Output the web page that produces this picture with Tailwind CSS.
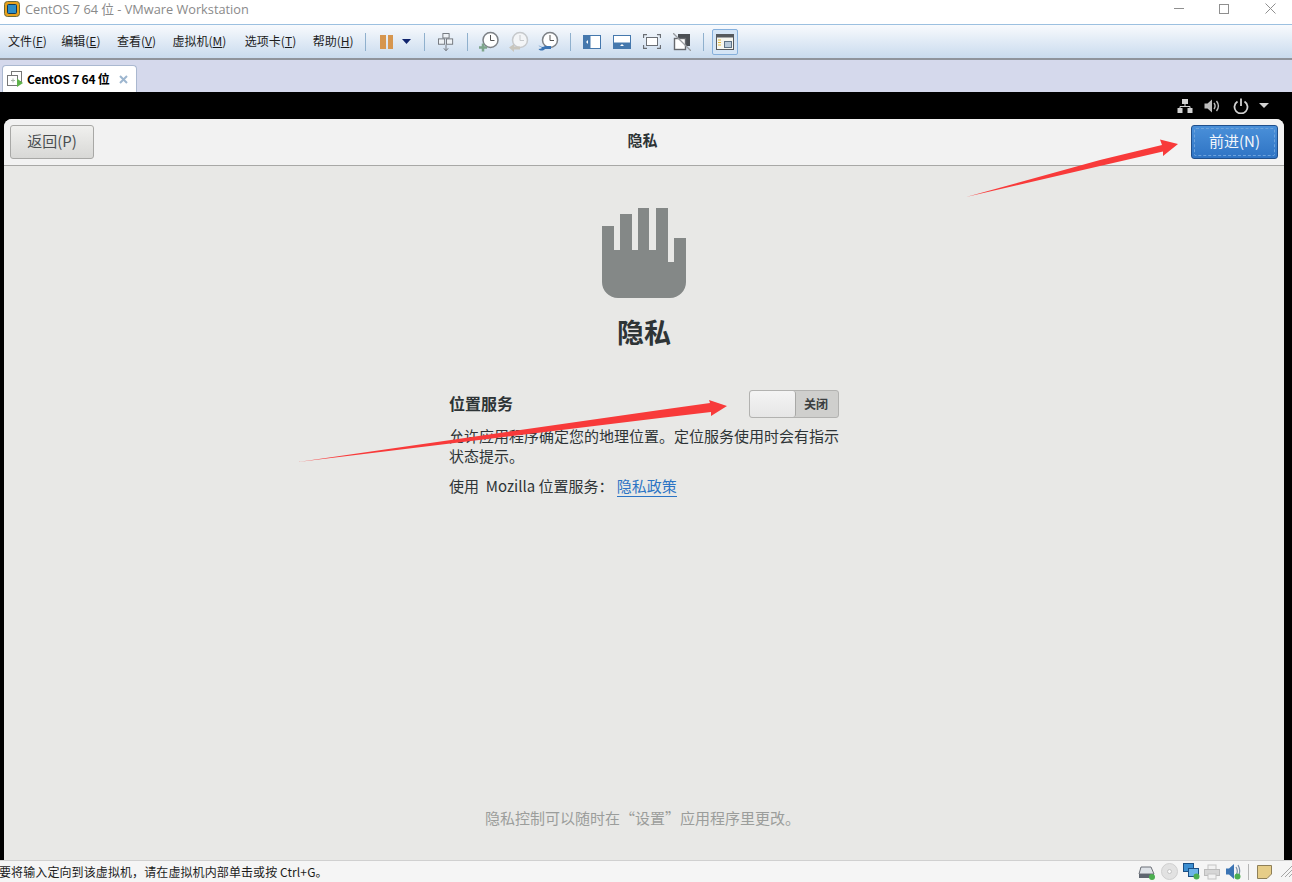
<!DOCTYPE html>
<html lang="zh-CN">
<head>
<meta charset="utf-8">
<title>CentOS 7 64 位 - VMware Workstation</title>
<script src="https://cdn.jsdelivr.net/npm/@tailwindcss/browser@4"></script>
</head>
<body class="m-0 overflow-hidden bg-white">
<div class="relative flex h-[882px] w-[1292px] flex-col overflow-hidden font-['Open_Sans','Noto_Sans_CJK_SC',sans-serif]">

  <!-- title bar -->
  <div class="flex h-[25px] shrink-0 items-center border-b border-[#9cc0e0] bg-white pb-[7px]">
    <svg class="ml-[4px] h-[16px] w-[16px]" viewBox="0 0 16 16"><rect x="0.5" y="0.5" width="15" height="15" rx="3" fill="#e9a21c" stroke="#6d6a3a"/><rect x="3.5" y="3.5" width="9" height="9" rx="1" fill="#2f8fc6" stroke="#123b57"/></svg>
    <span class="ml-[5px] text-[12.75px] leading-[16px] text-[#8a8a8a]">CentOS 7 64 位 - VMware Workstation</span>
    <div class="ml-auto flex items-center">
      <div class="mr-[35px] h-px w-[10px] bg-[#8f8f8f]"></div>
      <div class="mr-[36px] h-[10px] w-[10px] border border-[#8f8f8f]"></div>
      <svg class="mr-[16px] h-[11px] w-[11px]" viewBox="0 0 11 11"><path d="M0.5 0.5 10.5 10.5M10.5 0.5 0.5 10.5" stroke="#8f8f8f" fill="none"/></svg>
    </div>
  </div>

  <!-- toolbar -->
  <div class="flex h-[35px] shrink-0 items-center border-b-2 border-[#8f949c] bg-linear-to-b from-[#f8fafd] to-[#c9dbee] pl-[8px] font-['Noto_Sans_CJK_SC',sans-serif] text-[12px] text-[#1c1c1c]">
    <div class="flex w-[357px] gap-[16.5px] pb-[2px]">
      <span class="mr-[-2px]">文件(<u>F</u>)</span><span>编辑(<u>E</u>)</span><span>查看(<u>V</u>)</span><span>虚拟机(<u>M</u>)</span><span class="ml-[2px]">选项卡(<u>T</u>)</span><span>帮助(<u>H</u>)</span>
    </div>
    <div class="h-[18px] w-px bg-[#8fb0cd]"></div>
    <div class="ml-[14px] flex gap-[2px]"><div class="h-[14px] w-[6px] bg-[#d6964f]"></div><div class="h-[14px] w-[5px] bg-[#d6964f]"></div></div>
    <svg class="ml-[9px] h-[5px] w-[9px]" viewBox="0 0 9 5"><path d="M0 0H9L4.500 5Z" fill="#10246e"/></svg>
    <div class="ml-[13px] h-[18px] w-px bg-[#8fb0cd]"></div>
    <svg class="ml-[13px] h-[24px] w-[16px]" viewBox="0 0 18 24"><g fill="#eef2f6" stroke="#6b6f75"><rect x="5.500" y="2.500" width="7" height="5"/><rect x="0.500" y="8.500" width="7" height="6"/><rect x="9.500" y="8.500" width="7" height="6"/></g><path d="M9 15v6M6.500 19 9 22l2.500-3" stroke="#6b6f75" fill="none"/></svg>
    <div class="ml-[13px] h-[18px] w-px bg-[#8fb0cd]"></div>
    <svg class="ml-[10px] h-[24px] w-[21px]" viewBox="0 0 21 24"><circle cx="12.500" cy="10" r="7.500" fill="#fff" stroke="#7d8186" stroke-width="1.500"/><path d="M12.500 5v5.500h4" stroke="#555" fill="none"/><path d="M1 17.500h8M5 13.500v8" stroke="#7ea58c" stroke-width="2.500"/></svg>
    <svg class="ml-[9px] h-[24px] w-[21px]" viewBox="0 0 21 24"><circle cx="12" cy="10" r="7.500" fill="#f3f5f7" stroke="#c6c9cc" stroke-width="1.500"/><path d="M12 5v5.500h4" stroke="#c6c9cc" fill="none"/><path d="M1 17.500 6 14v2.500h6v3H6V22Z" fill="#c9c6bd"/></svg>
    <svg class="ml-[9px] h-[24px] w-[21px]" viewBox="0 0 21 24"><circle cx="12" cy="10" r="7.500" fill="#fff" stroke="#7d8186" stroke-width="1.500"/><path d="M12 5v5.500h4" stroke="#555" fill="none"/><path d="M0.500 15.500c2 2 5 1.500 6.500.5h6v3H7c-2 2-5 2-6.500 0l3-.5v-2Z" fill="#3b74b4"/></svg>
    <div class="ml-[11px] h-[18px] w-px bg-[#8fb0cd]"></div>
    <svg class="ml-[12px] h-[14px] w-[18px]" viewBox="0 0 18 14"><rect width="18" height="14" fill="#4578ad"/><rect x="7.500" y="1" width="9.500" height="12" fill="#fff"/><path d="M3 7 5 5v4Z" fill="#fff"/></svg>
    <svg class="ml-[12px] h-[14px] w-[18px]" viewBox="0 0 18 14"><rect width="18" height="14" fill="#4578ad"/><rect x="1" y="1" width="16" height="6.500" fill="#fff"/><path d="M7 11l2-2 2 2Z" fill="#fff"/></svg>
    <svg class="ml-[12px] h-[15px] w-[18px]" viewBox="0 0 18 15"><rect x="3.500" y="3.500" width="11" height="8" fill="#fff" stroke="#6b6f75"/><path d="M0.500 4V.5H4M14 .5h3.500V4M17.500 11v3.500H14M4 14.500H.5V11" stroke="#6b6f75" stroke-width="1.300" fill="none"/></svg>
    <svg class="ml-[12px] h-[18px] w-[18px]" viewBox="0 0 18 18"><rect x="5.500" y="1.500" width="11" height="11" fill="#4a4e53" stroke="#4a4e53"/><rect x="1.500" y="5.500" width="11" height="11" fill="#fff" stroke="#66696e" stroke-width="1.400"/><path d="M0 0 18 18" stroke="#9a9da1" stroke-width="1.300"/></svg>
    <div class="ml-[12px] h-[18px] w-px bg-[#8fb0cd]"></div>
    <div class="ml-[8px] flex h-[26px] w-[26px] items-center justify-center rounded-[2px] border border-[#86b0dc] bg-[#d5e5f6]">
      <svg class="h-[16px] w-[18px]" viewBox="0 0 18 16"><rect x="0.500" y="0.500" width="17" height="15" fill="#f6f6f0" stroke="#55595e"/><rect width="18" height="3.500" fill="#55595e"/><path d="M2 6h3M2 8.500h3M2 11h3" stroke="#e2b93c"/><rect x="8.500" y="7.500" width="7" height="6" fill="#b7c9da" stroke="#5d7286"/></svg>
    </div>
  </div>

  <!-- tab strip -->
  <div class="flex h-[32px] shrink-0 items-end bg-[#d5d9ec] pl-[2px]">
    <div class="flex h-[27px] w-[135px] items-center rounded-t-[4px] border border-b-0 border-[#aab8d0] bg-white pl-[4px]">
      <svg class="h-[16px] w-[16px]" viewBox="0 0 16 16"><rect x="4.500" y="0.500" width="10" height="10" fill="#fff" stroke="#777"/><rect x="0.500" y="4.500" width="10" height="10" fill="#fff" stroke="#777"/><path d="M4 9.500h4M6 7.500v4" stroke="#a9b7a9"/><path d="M10 7.500 16 12l-6 4Z" fill="#5fb24a"/></svg>
      <span class="ml-[4px] font-['Noto_Sans_CJK_SC',sans-serif] text-[12px] font-bold tracking-[-0.25px] text-black">CentOS 7 64 位</span>
      <svg class="ml-[10px] h-[9px] w-[9px]" viewBox="0 0 9 9"><path d="M1 1 8 8M8 1 1 8" stroke="#9db6cf" stroke-width="2"/></svg>
    </div>
  </div>

  <!-- guest console -->
  <div class="flex min-h-0 flex-1 flex-col bg-black">
    <div class="flex h-[27px] shrink-0 items-center justify-end pr-[23px]">
      <svg class="h-[16px] w-[16px]" viewBox="0 0 16 16"><g fill="#d2d2d2"><rect x="5" y="1" width="6" height="5"/><rect x="0.500" y="10" width="5" height="5"/><rect x="10.500" y="10" width="5" height="5"/></g><path d="M8 6v3M3 10V8.500h10V10" stroke="#d2d2d2" fill="none"/></svg>
      <svg class="ml-[11px] h-[16px] w-[16px]" viewBox="0 0 16 16"><path d="M0.500 5.500h3L8 1.500v13l-4.500-4h-3Z" fill="#bdbdbd"/><path d="M10 5c1.300 1.800 1.300 4.200 0 6M12.500 3c2.300 3 2.300 7 0 10" stroke="#bdbdbd" stroke-width="1.400" fill="none"/></svg>
      <svg class="ml-[13px] h-[16px] w-[16px]" viewBox="0 0 16 16"><path d="M4.500 3.500a6.500 6.500 0 1 0 7 0" stroke="#d2d2d2" stroke-width="1.800" fill="none"/><path d="M8 0.500V8" stroke="#d2d2d2" stroke-width="1.800"/></svg>
      <svg class="ml-[10px] h-[5px] w-[10px]" viewBox="0 0 10 5"><path d="M0 0H10L5 5Z" fill="#d2d2d2"/></svg>
    </div>

    <div class="mx-[4px] mr-[8px] flex min-h-0 flex-1 flex-col overflow-hidden rounded-t-[8px] bg-[#e8e8e6] font-['Noto_Sans_CJK_SC',sans-serif] text-[15px] text-[#2e3436]">
      <!-- header -->
      <div class="flex h-[47px] shrink-0 items-center justify-between border-b border-[#a8a8a6] bg-[#f2f2f2] px-[6px]">
        <div class="flex h-[34px] w-[84px] items-center justify-center rounded-[3px] border border-[#a8a8a6] bg-linear-to-b from-[#f0f0ee] to-[#d8d8d6] pb-[2px] text-[#4a4e50]">返回(P)</div>
        <div class="pb-[3px] text-[15px] font-bold">隐私</div>
        <div class="flex h-[34px] w-[87px] items-center justify-center rounded-[3px] border border-[#1f4f8c] bg-linear-to-b from-[#4a90d9] to-[#2f74c4] text-[#f2f6fb]">
          <span class="flex h-[28px] w-[81px] items-center justify-center rounded-[2px] border border-dashed border-[#6ea3dc] pb-[2px]">前进(N)</span>
        </div>
      </div>

      <!-- body -->
      <div class="flex min-h-0 flex-1 flex-col items-center">
        <svg class="mt-[42px] h-[90px] w-[84px]" viewBox="0 0 84 90"><path d="M0 18h12v24h6V6h12v36h6V0h11v42h7V0h12v54h6V30h12v44a16 16 0 0 1-16 16H16A16 16 0 0 1 0 74Z" fill="#848887"/></svg>
        <div class="mt-[15px] text-[27px] leading-[38px] font-bold">隐私</div>
        <div class="mt-[39px] w-[390px]">
          <div class="flex h-[28px] items-center justify-between">
            <span class="pb-[2px] text-[16px] font-bold">位置服务</span>
            <div class="flex h-[28px] w-[90px] items-stretch rounded-[3px] border border-[#b2b2b0] bg-[#cfcfcd]">
              <div class="w-[46px] rounded-[3px] border-r border-[#a8a8a6] bg-linear-to-b from-[#f4f4f4] to-[#e6e6e6]"></div>
              <div class="flex flex-1 items-center justify-center pr-[2px] text-[12px] font-bold text-[#3a3e40]">关闭</div>
            </div>
          </div>
          <p class="mt-[8px] leading-[20px]">允许应用程序确定您的地理位置。定位服务使用时会有指示状态提示。</p>
          <p class="mt-[10px] leading-[20px]">使用 &nbsp;Mozilla 位置服务： <a class="inline-block border-b border-[#2c74c4] text-[#2c74c4]">隐私政策</a></p>
        </div>
        <div class="mt-auto mr-[3px] mb-[31px] text-[#9b9d9b]">隐私控制可以随时在“设置”应用程序里更改。</div>
      </div>
    </div>
  </div>

  <!-- status bar -->
  <div class="flex h-[22px] shrink-0 items-center border-t border-[#d0d0d0] bg-[#f5f5f5] font-['Noto_Sans_CJK_SC',sans-serif] text-[12px] text-[#1c1c1c]">
    <span class="ml-[-1px] pt-[1px] tracking-[0.1px]">要将输入定向到该虚拟机，请在虚拟机内部单击或按 Ctrl+G。</span>
    <div class="ml-auto flex items-center">
      <svg class="h-[16px] w-[18px]" viewBox="0 0 18 16"><path d="M3 3h10l3 7H1Z" fill="#dfe3e8" stroke="#6d7178"/><rect x="1" y="10" width="15" height="4" fill="#5f6670"/><circle cx="14" cy="13" r="3" fill="#4caf50"/></svg>
      <svg class="ml-[5px] h-[17px] w-[17px]" viewBox="0 0 17 17"><circle cx="8.500" cy="8.500" r="8" fill="#e2e2e2" stroke="#cfcfcf"/><circle cx="8.500" cy="8.500" r="2" fill="#fafafa" stroke="#c4c4c4"/></svg>
      <svg class="ml-[5px] h-[17px] w-[17px]" viewBox="0 0 17 17"><rect x="0.500" y="0.500" width="10" height="8" fill="#3d8fd1" stroke="#1b4f85"/><rect x="5.500" y="5.500" width="10" height="8" fill="#6cb4e8" stroke="#1b4f85"/><circle cx="13.500" cy="13.500" r="3" fill="#4caf50"/></svg>
      <svg class="ml-[4px] h-[16px] w-[16px]" viewBox="0 0 16 16"><rect x="4" y="1" width="8" height="5" fill="#f2f2f2" stroke="#c4c4c4"/><rect x="0.500" y="5.500" width="15" height="6" fill="#d6d6d6" stroke="#bcbcbc"/><rect x="4" y="10" width="8" height="5" fill="#f2f2f2" stroke="#c4c4c4"/></svg>
      <svg class="ml-[5px] h-[17px] w-[16px]" viewBox="0 0 16 17"><path d="M1 5.500h3L9 1v15l-5-4.500H1Z" fill="#3b74b4"/><path d="M11 4c1.500 2.500 1.500 6 0 8M13 2c2 3.500 2 8.500 0 12" stroke="#7a8fa8" stroke-width="1.200" fill="none"/><circle cx="12.500" cy="13.500" r="3" fill="#4caf50"/></svg>
      <div class="ml-[7px] h-[16px] w-px bg-[#b5b5b5]"></div>
      <svg class="ml-[8px] h-[14px] w-[15px]" viewBox="0 0 15 14"><path d="M0.500 0.500h14V9l-4.500 4.500H.5Z" fill="#e6cd88" stroke="#8e7f58"/></svg>
      <svg class="ml-[9px] h-[11px] w-[11px]" viewBox="0 0 11 11"><path d="M0 11 11 0M4 11 11 4M8 11 11 8" stroke="#a5a5a5"/></svg>
    </div>
  </div>

  <!-- annotation arrows -->
  <svg class="pointer-events-none absolute inset-0" width="1292" height="882" viewBox="0 0 1292 882">
    <path d="M966 197 1100 160 1162 145 1160 139.500 1178 144 1163 156 1163 151.500 1100 166Z" fill="#f83a3a"/>
    <path d="M298 462 660 410 710 403 709 400 727 406 711 416 711 412 660 418Z" fill="#f83a3a"/>
  </svg>
</div>
</body>
</html>
